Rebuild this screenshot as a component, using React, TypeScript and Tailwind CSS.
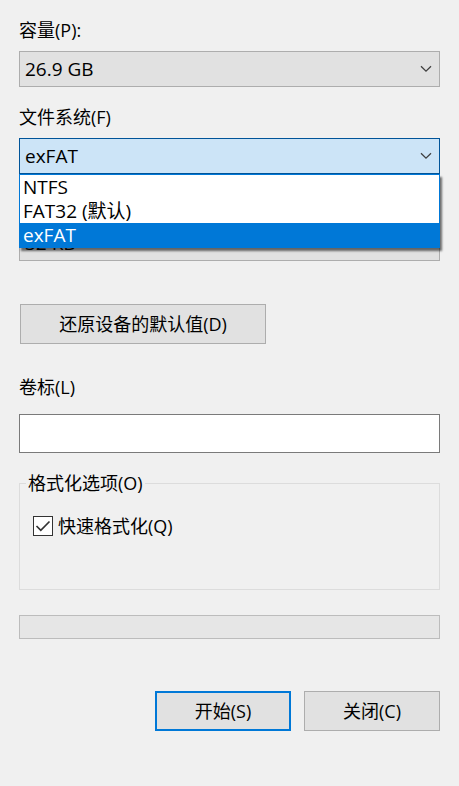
import { useId, useState } from "react";
import type { ReactNode } from "react";

const fileSystems = [
  { value: "NTFS", label: "NTFS" },
  { value: "FAT32", label: "FAT32 (默认)" },
  { value: "exFAT", label: "exFAT" },
];

type Option = { value: string; label: string };

type ComboBoxProps = {
  name: string;
  label?: string;
  options: Option[];
  value?: string;
  open?: boolean;
  onChange?: (value: string) => void;
  children?: ReactNode;
};

function ComboBox({ name, label, options, value, open = false, onChange, children }: ComboBoxProps) {
  const id = useId();
  const colours = open ? "border-[#005499] bg-[#cce4f7]" : "border-[#adadad] bg-[#e1e1e1]";

  return (
    <div className="mt-[18px] flex flex-col items-start gap-[9px]">
      <label htmlFor={id} className="h-6 leading-6">
        {label}
      </label>
      <div className="relative w-full text-[19px]">
        <select
          id={id}
          aria-label={name}
          value={value}
          onChange={(event) => onChange?.(event.target.value)}
          className={`block h-9 w-full appearance-none border pr-8 pl-[5px] outline-none ${colours}`}
        >
          {options.map((option) => (
            <option key={option.value} value={option.value}>
              {option.label}
            </option>
          ))}
        </select>
        <svg
          viewBox="0 0 12 8"
          className="pointer-events-none absolute top-[14px] right-2 h-2 w-3"
          fill="none"
          stroke="#404040"
          strokeWidth="1.3"
          aria-hidden="true"
        >
          <path d="M1 1.2 L6 6.2 L11 1.2" />
        </svg>
        {children}
      </div>
    </div>
  );
}

const buttonBase = "h-10 bg-[#e1e1e1] text-center";

export default function App() {
  const [fileSystem, setFileSystem] = useState("exFAT");
  const [volumeLabel, setVolumeLabel] = useState("");
  const [quick, setQuick] = useState(true);

  return (
    <main className="flex min-h-screen flex-col bg-[#f0f0f0] px-[19px] pb-10 font-['Open_Sans','Noto_Sans_CJK_SC',sans-serif] text-[18px] leading-6 text-black">
      <ComboBox name="容量" label="容量(P):" options={[{ value: "26.9", label: "26.9 GB" }]} />

      <ComboBox
        name="文件系统"
        label="文件系统(F)"
        options={fileSystems}
        value={fileSystem}
        onChange={setFileSystem}
        open
      >
        <ul
          role="listbox"
          aria-label="文件系统"
          className="absolute inset-x-0 top-full z-10 border border-[#0078d7] bg-white shadow-[2px_3px_2px_rgba(0,0,0,0.55)]"
        >
          {fileSystems.map((item) => (
            <li
              key={item.value}
              role="option"
              aria-selected={item.value === fileSystem}
              onClick={() => setFileSystem(item.value)}
              className={`h-6 pl-[3px] leading-6 ${
                item.value === fileSystem ? "bg-[#0078d7] text-white" : ""
              }`}
            >
              {item.label}
            </li>
          ))}
        </ul>
      </ComboBox>

      <ComboBox name="分配单元大小" options={[{ value: "32", label: "32 KB" }]} />

      <button
        type="button"
        className={`mt-[43px] ml-px w-[246px] border border-[#adadad] ${buttonBase}`}
      >
        还原设备的默认值(D)
      </button>

      <label htmlFor="volume-label" className="mt-[31px] self-start">
        卷标(L)
      </label>
      <input
        id="volume-label"
        type="text"
        value={volumeLabel}
        onChange={(event) => setVolumeLabel(event.target.value)}
        className="mt-[15px] h-[39px] w-full border border-[#7a7a7a] bg-white px-1 outline-none"
      />

      <fieldset className="mt-[18px] h-[119px] border border-[#dcdcdc] px-[13px]">
        <legend className="-ml-[7px] px-[2px]">格式化选项(O)</legend>
        <label className="mt-[19px] flex w-fit items-center gap-[5px]">
          <span className="relative size-5">
            <input
              type="checkbox"
              checked={quick}
              onChange={(event) => setQuick(event.target.checked)}
              className="peer block size-5 appearance-none border border-[#333333] bg-white"
            />
            <svg
              viewBox="0 0 20 20"
              className="pointer-events-none absolute inset-0 hidden size-5 peer-checked:block"
              fill="none"
              stroke="#333333"
              strokeWidth="1.7"
              aria-hidden="true"
            >
              <path d="M3.5 10 L7.8 14.3 L16.5 5.5" />
            </svg>
          </span>
          快速格式化(Q)
        </label>
      </fieldset>

      <progress
        value={0}
        max={100}
        aria-label="格式化进度"
        className="mt-[25px] block h-6 w-full appearance-none border border-[#bcbcbc] bg-[#e6e6e6] [&::-webkit-progress-bar]:bg-[#e6e6e6] [&::-webkit-progress-value]:bg-[#06b025]"
      />

      <div className="mt-[52px] flex justify-end gap-[13px]">
        <button type="button" className={`w-[136px] border-2 border-[#0078d7] ${buttonBase}`}>
          开始(S)
        </button>
        <button type="button" className={`w-[136px] border border-[#adadad] ${buttonBase}`}>
          关闭(C)
        </button>
      </div>
    </main>
  );
}
